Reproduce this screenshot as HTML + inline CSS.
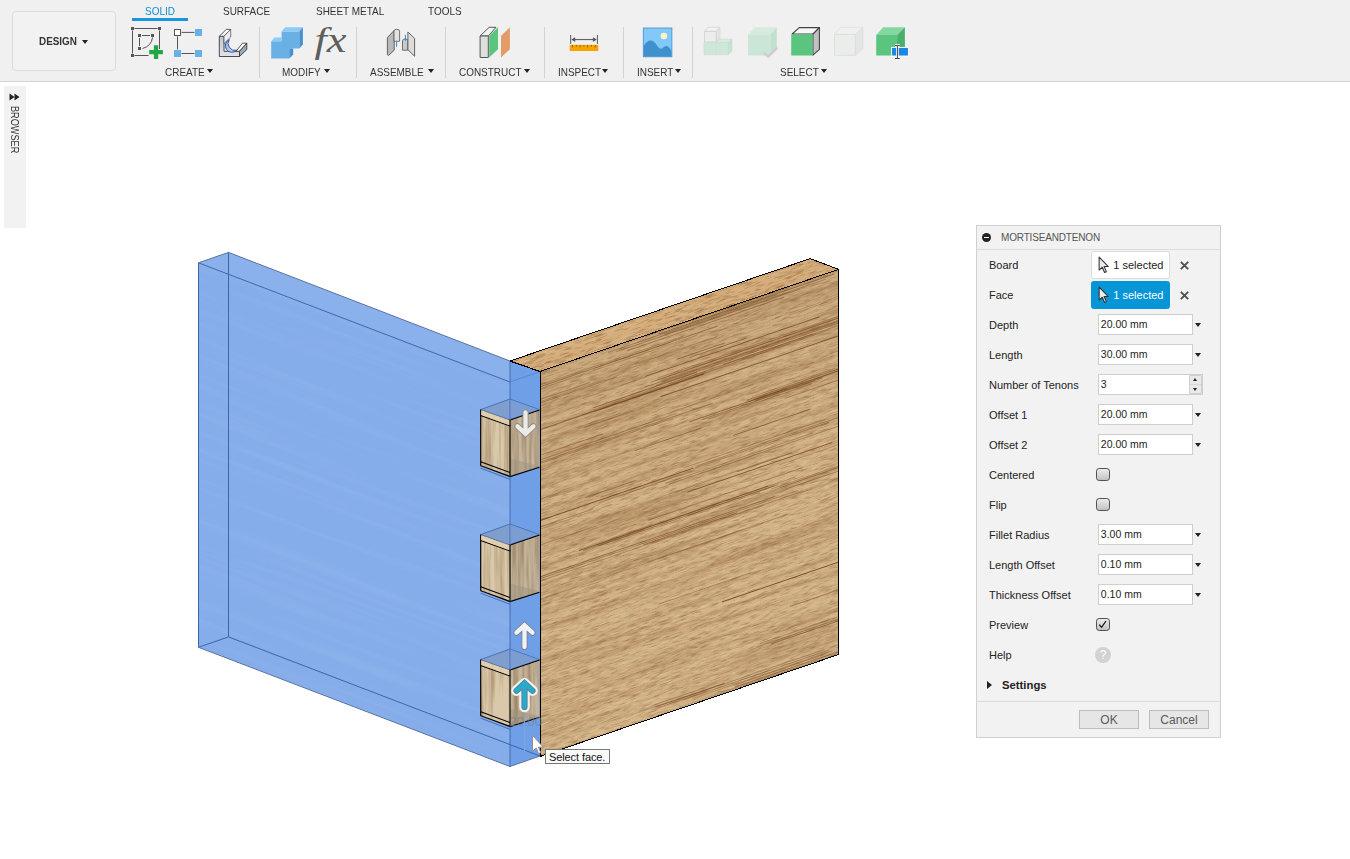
<!DOCTYPE html>
<html><head><meta charset="utf-8"><title>Fusion 360</title>
<style>
*{box-sizing:border-box}
html,body{margin:0;padding:0}
body{width:1350px;height:859px;position:relative;overflow:hidden;background:#fff;font-family:"Liberation Sans",sans-serif;color:#333}
#model{position:absolute;left:0;top:0}
#tb{position:absolute;left:0;top:0;width:1350px;height:82px;background:#f0f0f0;border-bottom:1px solid #d2d2d2}
#design{position:absolute;left:12px;top:11px;width:104px;height:60px;border:1px solid #dcdcdc;border-radius:4px;background:#f2f2f2}
#design span{position:absolute;left:26px;top:23px;font-size:11px;font-weight:bold;color:#333;line-height:13px;transform:scaleX(0.9);transform-origin:0 0}
.dd{position:absolute;width:0;height:0;border-left:3.5px solid transparent;border-right:3.5px solid transparent;border-top:4px solid #222}
.tab{position:absolute;top:5px;font-size:11px;line-height:13px;color:#333;white-space:nowrap;transform:scaleX(0.905);transform-origin:0 0}
.tab.on{color:#0e8fd6}
#tabline{position:absolute;left:132px;top:18px;width:56px;height:3px;background:#1b96dc}
.grp{position:absolute;top:65.5px;font-size:11px;line-height:13px;color:#333;white-space:nowrap;transform:scaleX(0.905);transform-origin:0 0}
.sep{position:absolute;top:26.5px;width:1px;height:51.5px;background:#d3d3d3}
.ico{position:absolute}
#browser{position:absolute;left:4px;top:86px;width:22px;height:142px;background:#f2f2f2}
#browser .t{position:absolute;left:4.5px;top:19.5px;font-size:10px;color:#333;writing-mode:vertical-rl;line-height:11px;transform:scaleY(0.915);transform-origin:0 0}
#dlg{position:absolute;left:976px;top:225px;width:245px;height:513px;background:#f2f2f2;border:1px solid #d0d0d0}
#dlg .hd{position:absolute;left:0;top:0;width:243px;height:23px;border-bottom:1px solid #dcdcdc}
#dlg .hd b{position:absolute;left:5.2px;top:6px;width:9px;height:9px;border-radius:50%;background:#222}
#dlg .hd b:after{content:"";position:absolute;left:2px;top:4px;width:5px;height:1.4px;background:#fff}
#dlg .hd span{position:absolute;left:24px;top:5px;font-size:10px;line-height:12px;color:#555;font-weight:normal;letter-spacing:-0.17px}
.lbl{position:absolute;left:12px;font-size:11px;line-height:13px;color:#222;white-space:nowrap}
.inp{position:absolute;left:121px;width:95px;height:21px;border:1px solid #cfcfcf;background:#fff;font-size:10.5px;line-height:13px;color:#222;padding:3px 0 0 1.8px}
.da{position:absolute;left:217.5px;width:0;height:0;border-left:3px solid transparent;border-right:3px solid transparent;border-top:4px solid #222}
.sel{position:absolute;left:114.3px;width:78.6px;height:28px;border:1.3px solid #dcdcdc;background:#fff;border-radius:2.5px;font-size:11px;line-height:13px;color:#222}
.sel span{position:absolute;left:21px;top:6.4px}
.sel.on{background:#0696d7;border-color:#0696d7;color:#fff}
.sel svg{position:absolute;left:5.6px;top:3.6px}
.xx{position:absolute;left:202.3px;width:11px;height:11px}
.cb{position:absolute;left:119.2px;width:13.6px;height:13.2px;border:1.2px solid #505050;border-radius:3.2px;background:linear-gradient(#ececec,#c2c2c2)}
.btn{position:absolute;top:483px;height:19px;border:1px solid #bdbdbd;background:#e6e6e6;font-size:12px;line-height:15px;color:#5a5a5a;text-align:center;padding-top:1.6px}
#tip{position:absolute;left:545px;top:749px;width:65px;height:15px;border:1px solid #767676;background:#fafafa;font-size:11px;line-height:13px;color:#111;padding:1px 0 0 3px;white-space:nowrap;letter-spacing:-0.1px}
</style></head>
<body>
<svg id="model" width="1350" height="859" viewBox="0 0 1350 859">
<defs>
<filter id="grain" x="0" y="0" width="100%" height="100%" color-interpolation-filters="sRGB">
<feTurbulence type="fractalNoise" baseFrequency="0.006 0.16" numOctaves="4" seed="11" result="n"/>
<feColorMatrix in="n" type="matrix" values="0 0 0 0 0.47  0 0 0 0 0.28  0 0 0 0 0.10  0 0 0 2.6 -1.0"/>
</filter>
<filter id="grainL" x="0" y="0" width="100%" height="100%" color-interpolation-filters="sRGB">
<feTurbulence type="fractalNoise" baseFrequency="0.006 0.2" numOctaves="3" seed="5" result="n"/>
<feColorMatrix in="n" type="matrix" values="0 0 0 0 0.90  0 0 0 0 0.81  0 0 0 0 0.65  0 0 0 2.2 -1.0"/>
</filter>
<filter id="speck" x="0" y="0" width="100%" height="100%" color-interpolation-filters="sRGB">
<feTurbulence type="fractalNoise" baseFrequency="0.1 1.3" numOctaves="2" seed="3" result="n"/>
<feColorMatrix in="n" type="matrix" values="0 0 0 0 0.48  0 0 0 0 0.33  0 0 0 0 0.17  0 0 0 3.2 -1.5"/>
</filter>
<filter id="speckL" x="0" y="0" width="100%" height="100%" color-interpolation-filters="sRGB">
<feTurbulence type="fractalNoise" baseFrequency="0.1 1.3" numOctaves="2" seed="23" result="n"/>
<feColorMatrix in="n" type="matrix" values="0 0 0 0 0.93  0 0 0 0 0.85  0 0 0 0 0.70  0 0 0 3.2 -1.5"/>
</filter>
<filter id="grainW" x="0" y="0" width="100%" height="100%" color-interpolation-filters="sRGB">
<feTurbulence type="fractalNoise" baseFrequency="0.004 0.11" numOctaves="3" seed="17" result="n"/>
<feColorMatrix in="n" type="matrix" values="0 0 0 0 0.82  0 0 0 0 0.90  0 0 0 0 1  0 0 0 2.4 -1.0"/>
</filter>
<filter id="grainV" x="0" y="0" width="100%" height="100%" color-interpolation-filters="sRGB">
<feTurbulence type="fractalNoise" baseFrequency="0.22 0.012" numOctaves="3" seed="8" result="n"/>
<feColorMatrix in="n" type="matrix" values="0 0 0 0 0.45  0 0 0 0 0.30  0 0 0 0 0.15  0 0 0 2.4 -0.95"/>
</filter>
<linearGradient id="gTopDark" x1="0" y1="0" x2="0" y2="1"><stop offset="0" stop-color="#7a4c1c" stop-opacity="0.13"/><stop offset="0.45" stop-color="#7a4c1c" stop-opacity="0.04"/><stop offset="1" stop-color="#7a4c1c" stop-opacity="0"/></linearGradient>
<clipPath id="cFront"><polygon points="540.0,371.5 838.6,269.4 838.6,654.5 540.0,756.5"/></clipPath>
<clipPath id="cTop"><polygon points="510.0,361.0 540.0,371.5 838.6,269.4 810.3,258.6"/></clipPath>
</defs>
<polygon points="510.0,361.0 540.0,371.5 838.6,269.4 810.3,258.6" fill="#d5ad7b"/>
<g clip-path="url(#cTop)">
<g transform="translate(505,330) skewY(-18.88)"><rect x="0" y="0" width="345" height="160" filter="url(#grainL)" opacity="0.35"/><rect x="0" y="0" width="345" height="160" filter="url(#speck)" opacity="0.5"/></g>
</g>
<polygon points="540.0,371.5 838.6,269.4 838.6,654.5 540.0,756.5" fill="#d5b58a"/>
<g clip-path="url(#cFront)">
<g transform="translate(540,371.5) skewY(-18.88)"><rect x="0" y="-10" width="300" height="400" filter="url(#grain)" opacity="0.30"/><rect x="0" y="-10" width="300" height="400" filter="url(#grainL)" opacity="0.28"/><rect x="0" y="-10" width="300" height="400" filter="url(#speck)" opacity="0.42"/><rect x="0" y="-10" width="300" height="400" filter="url(#speckL)" opacity="0.36"/><rect x="0" y="-10" width="300" height="400" fill="url(#gTopDark)"/></g>
<line x1="595.0" y1="367.9" x2="671.0" y2="341.9" stroke="#693a14" stroke-width="0.5" stroke-opacity="0.54" stroke-linecap="round"/>
<line x1="528.1" y1="549.2" x2="595.5" y2="526.2" stroke="#693a14" stroke-width="0.5" stroke-opacity="0.62" stroke-linecap="round"/>
<line x1="509.2" y1="410.0" x2="589.4" y2="382.6" stroke="#693a14" stroke-width="0.9" stroke-opacity="0.40" stroke-linecap="round"/>
<line x1="522.2" y1="407.8" x2="605.2" y2="379.4" stroke="#693a14" stroke-width="0.8" stroke-opacity="0.33" stroke-linecap="round"/>
<line x1="519.8" y1="410.0" x2="616.5" y2="376.9" stroke="#693a14" stroke-width="0.7" stroke-opacity="0.47" stroke-linecap="round"/>
<line x1="669.0" y1="494.2" x2="800.0" y2="449.4" stroke="#693a14" stroke-width="0.6" stroke-opacity="0.55" stroke-linecap="round"/>
<line x1="677.1" y1="359.2" x2="724.4" y2="343.1" stroke="#693a14" stroke-width="0.8" stroke-opacity="0.72" stroke-linecap="round"/>
<line x1="689.9" y1="357.4" x2="745.6" y2="338.3" stroke="#693a14" stroke-width="0.8" stroke-opacity="0.63" stroke-linecap="round"/>
<line x1="677.1" y1="699.9" x2="824.3" y2="649.6" stroke="#693a14" stroke-width="0.6" stroke-opacity="0.62" stroke-linecap="round"/>
<line x1="682.9" y1="700.0" x2="829.1" y2="650.0" stroke="#693a14" stroke-width="0.9" stroke-opacity="0.49" stroke-linecap="round"/>
<line x1="693.0" y1="698.4" x2="832.3" y2="650.8" stroke="#693a14" stroke-width="0.7" stroke-opacity="0.42" stroke-linecap="round"/>
<line x1="579.5" y1="550.5" x2="767.9" y2="486.1" stroke="#693a14" stroke-width="0.9" stroke-opacity="0.75" stroke-linecap="round"/>
<line x1="598.1" y1="546.1" x2="774.1" y2="485.8" stroke="#693a14" stroke-width="0.6" stroke-opacity="0.79" stroke-linecap="round"/>
<line x1="605.6" y1="545.1" x2="759.6" y2="492.4" stroke="#693a14" stroke-width="0.6" stroke-opacity="0.43" stroke-linecap="round"/>
<line x1="646.0" y1="336.1" x2="788.3" y2="287.5" stroke="#693a14" stroke-width="0.5" stroke-opacity="0.77" stroke-linecap="round"/>
<line x1="658.7" y1="334.0" x2="833.8" y2="274.1" stroke="#693a14" stroke-width="0.7" stroke-opacity="0.78" stroke-linecap="round"/>
<line x1="664.7" y1="334.3" x2="825.8" y2="279.2" stroke="#693a14" stroke-width="0.7" stroke-opacity="0.52" stroke-linecap="round"/>
<line x1="639.1" y1="544.4" x2="733.5" y2="512.1" stroke="#693a14" stroke-width="0.5" stroke-opacity="0.38" stroke-linecap="round"/>
<line x1="644.1" y1="544.6" x2="736.9" y2="512.9" stroke="#693a14" stroke-width="0.9" stroke-opacity="0.64" stroke-linecap="round"/>
<line x1="650.8" y1="544.1" x2="763.2" y2="505.6" stroke="#693a14" stroke-width="0.7" stroke-opacity="0.37" stroke-linecap="round"/>
<line x1="749.0" y1="401.6" x2="1007.4" y2="313.2" stroke="#693a14" stroke-width="0.7" stroke-opacity="0.68" stroke-linecap="round"/>
<line x1="659.0" y1="604.1" x2="750.9" y2="572.7" stroke="#693a14" stroke-width="0.5" stroke-opacity="0.76" stroke-linecap="round"/>
<line x1="657.7" y1="378.0" x2="903.8" y2="293.9" stroke="#693a14" stroke-width="0.9" stroke-opacity="0.41" stroke-linecap="round"/>
<line x1="657.3" y1="380.2" x2="905.1" y2="295.4" stroke="#693a14" stroke-width="0.6" stroke-opacity="0.57" stroke-linecap="round"/>
<line x1="722.4" y1="601.8" x2="946.4" y2="525.2" stroke="#693a14" stroke-width="1.0" stroke-opacity="0.84" stroke-linecap="round"/>
<line x1="783.9" y1="335.7" x2="926.9" y2="286.8" stroke="#693a14" stroke-width="0.8" stroke-opacity="0.30" stroke-linecap="round"/>
<line x1="779.3" y1="464.9" x2="904.5" y2="422.1" stroke="#693a14" stroke-width="0.7" stroke-opacity="0.40" stroke-linecap="round"/>
<line x1="736.2" y1="684.5" x2="822.7" y2="654.9" stroke="#693a14" stroke-width="0.5" stroke-opacity="0.85" stroke-linecap="round"/>
<line x1="735.2" y1="687.0" x2="842.5" y2="650.3" stroke="#693a14" stroke-width="0.8" stroke-opacity="0.64" stroke-linecap="round"/>
<line x1="750.3" y1="683.8" x2="883.3" y2="638.3" stroke="#693a14" stroke-width="0.5" stroke-opacity="0.60" stroke-linecap="round"/>
<line x1="505.4" y1="611.3" x2="732.3" y2="533.7" stroke="#693a14" stroke-width="0.6" stroke-opacity="0.44" stroke-linecap="round"/>
<line x1="593.2" y1="407.8" x2="696.6" y2="372.4" stroke="#693a14" stroke-width="0.9" stroke-opacity="0.66" stroke-linecap="round"/>
<line x1="598.9" y1="407.9" x2="706.3" y2="371.2" stroke="#693a14" stroke-width="0.9" stroke-opacity="0.37" stroke-linecap="round"/>
<line x1="594.3" y1="411.6" x2="703.8" y2="374.2" stroke="#693a14" stroke-width="0.9" stroke-opacity="0.63" stroke-linecap="round"/>
<line x1="733.7" y1="435.3" x2="810.0" y2="409.2" stroke="#693a14" stroke-width="0.8" stroke-opacity="0.73" stroke-linecap="round"/>
<line x1="532.0" y1="432.4" x2="702.7" y2="374.0" stroke="#693a14" stroke-width="1.0" stroke-opacity="0.54" stroke-linecap="round"/>
<line x1="683.9" y1="467.8" x2="825.5" y2="419.3" stroke="#693a14" stroke-width="0.6" stroke-opacity="0.59" stroke-linecap="round"/>
<line x1="695.8" y1="466.2" x2="866.6" y2="407.8" stroke="#693a14" stroke-width="0.9" stroke-opacity="0.41" stroke-linecap="round"/>
<line x1="694.9" y1="468.0" x2="828.4" y2="422.4" stroke="#693a14" stroke-width="0.6" stroke-opacity="0.67" stroke-linecap="round"/>
<line x1="635.5" y1="364.5" x2="716.8" y2="336.7" stroke="#693a14" stroke-width="0.6" stroke-opacity="0.38" stroke-linecap="round"/>
<line x1="648.2" y1="520.3" x2="802.2" y2="467.7" stroke="#693a14" stroke-width="0.7" stroke-opacity="0.58" stroke-linecap="round"/>
<line x1="599.1" y1="502.9" x2="691.7" y2="471.3" stroke="#693a14" stroke-width="0.7" stroke-opacity="0.58" stroke-linecap="round"/>
<line x1="596.2" y1="545.2" x2="794.6" y2="477.3" stroke="#693a14" stroke-width="0.5" stroke-opacity="0.73" stroke-linecap="round"/>
<line x1="579.6" y1="549.3" x2="652.0" y2="524.6" stroke="#693a14" stroke-width="0.7" stroke-opacity="0.48" stroke-linecap="round"/>
<line x1="583.6" y1="550.4" x2="644.1" y2="529.7" stroke="#693a14" stroke-width="0.9" stroke-opacity="0.45" stroke-linecap="round"/>
<line x1="498.1" y1="513.5" x2="560.9" y2="492.1" stroke="#693a14" stroke-width="0.6" stroke-opacity="0.60" stroke-linecap="round"/>
<line x1="785.0" y1="398.4" x2="870.7" y2="369.0" stroke="#693a14" stroke-width="0.5" stroke-opacity="0.81" stroke-linecap="round"/>
<line x1="684.9" y1="415.5" x2="866.7" y2="353.4" stroke="#693a14" stroke-width="0.5" stroke-opacity="0.31" stroke-linecap="round"/>
<line x1="645.4" y1="387.0" x2="865.6" y2="311.7" stroke="#693a14" stroke-width="0.7" stroke-opacity="0.76" stroke-linecap="round"/>
<line x1="656.0" y1="385.5" x2="905.3" y2="300.3" stroke="#693a14" stroke-width="1.0" stroke-opacity="0.49" stroke-linecap="round"/>
<line x1="669.0" y1="383.6" x2="912.5" y2="300.3" stroke="#693a14" stroke-width="0.7" stroke-opacity="0.49" stroke-linecap="round"/>
<line x1="515.2" y1="535.6" x2="593.0" y2="508.9" stroke="#693a14" stroke-width="0.7" stroke-opacity="0.58" stroke-linecap="round"/>
<line x1="529.9" y1="532.8" x2="608.7" y2="505.8" stroke="#693a14" stroke-width="0.5" stroke-opacity="0.40" stroke-linecap="round"/>
<line x1="576.6" y1="428.0" x2="620.7" y2="413.0" stroke="#693a14" stroke-width="0.6" stroke-opacity="0.30" stroke-linecap="round"/>
<line x1="584.8" y1="427.3" x2="633.6" y2="410.7" stroke="#693a14" stroke-width="0.6" stroke-opacity="0.58" stroke-linecap="round"/>
<line x1="499.8" y1="469.1" x2="602.7" y2="434.0" stroke="#693a14" stroke-width="0.5" stroke-opacity="0.83" stroke-linecap="round"/>
<line x1="760.2" y1="643.4" x2="836.5" y2="617.3" stroke="#693a14" stroke-width="0.6" stroke-opacity="0.64" stroke-linecap="round"/>
<line x1="756.3" y1="647.2" x2="841.1" y2="618.2" stroke="#693a14" stroke-width="0.7" stroke-opacity="0.54" stroke-linecap="round"/>
<line x1="771.2" y1="643.9" x2="863.4" y2="612.3" stroke="#693a14" stroke-width="0.9" stroke-opacity="0.61" stroke-linecap="round"/>
<line x1="737.2" y1="471.6" x2="791.7" y2="453.0" stroke="#693a14" stroke-width="1.0" stroke-opacity="0.51" stroke-linecap="round"/>
<line x1="635.2" y1="450.5" x2="701.1" y2="428.0" stroke="#693a14" stroke-width="0.9" stroke-opacity="0.58" stroke-linecap="round"/>
<line x1="665.5" y1="483.3" x2="812.4" y2="433.1" stroke="#693a14" stroke-width="0.9" stroke-opacity="0.43" stroke-linecap="round"/>
<line x1="669.0" y1="484.2" x2="867.5" y2="416.3" stroke="#693a14" stroke-width="0.5" stroke-opacity="0.80" stroke-linecap="round"/>
<line x1="583.5" y1="398.3" x2="645.6" y2="377.0" stroke="#693a14" stroke-width="0.8" stroke-opacity="0.37" stroke-linecap="round"/>
<line x1="647.5" y1="562.1" x2="786.1" y2="514.8" stroke="#693a14" stroke-width="0.7" stroke-opacity="0.56" stroke-linecap="round"/>
<line x1="527.8" y1="581.1" x2="774.2" y2="496.8" stroke="#693a14" stroke-width="1.0" stroke-opacity="0.55" stroke-linecap="round"/>
<line x1="537.8" y1="579.5" x2="797.6" y2="490.6" stroke="#693a14" stroke-width="0.6" stroke-opacity="0.62" stroke-linecap="round"/>
<line x1="541.8" y1="580.5" x2="802.3" y2="491.4" stroke="#693a14" stroke-width="0.5" stroke-opacity="0.75" stroke-linecap="round"/>
<line x1="650.9" y1="382.2" x2="909.6" y2="293.7" stroke="#693a14" stroke-width="0.8" stroke-opacity="0.52" stroke-linecap="round"/>
<line x1="662.3" y1="380.3" x2="860.4" y2="312.5" stroke="#693a14" stroke-width="0.5" stroke-opacity="0.48" stroke-linecap="round"/>
<line x1="661.8" y1="382.3" x2="862.3" y2="313.8" stroke="#693a14" stroke-width="1.0" stroke-opacity="0.41" stroke-linecap="round"/>
<line x1="511.5" y1="394.9" x2="682.8" y2="336.3" stroke="#693a14" stroke-width="0.7" stroke-opacity="0.45" stroke-linecap="round"/>
<line x1="502.3" y1="399.7" x2="717.2" y2="326.2" stroke="#693a14" stroke-width="0.6" stroke-opacity="0.81" stroke-linecap="round"/>
<line x1="511.5" y1="398.6" x2="696.7" y2="335.3" stroke="#693a14" stroke-width="0.6" stroke-opacity="0.51" stroke-linecap="round"/>
<line x1="790.4" y1="606.3" x2="1025.5" y2="525.8" stroke="#693a14" stroke-width="0.7" stroke-opacity="0.71" stroke-linecap="round"/>
<line x1="688.1" y1="515.5" x2="777.8" y2="484.8" stroke="#693a14" stroke-width="0.6" stroke-opacity="0.71" stroke-linecap="round"/>
<line x1="689.8" y1="421.7" x2="786.4" y2="388.7" stroke="#693a14" stroke-width="0.7" stroke-opacity="0.75" stroke-linecap="round"/>
<line x1="702.7" y1="419.4" x2="815.1" y2="380.9" stroke="#693a14" stroke-width="0.9" stroke-opacity="0.54" stroke-linecap="round"/>
<line x1="708.6" y1="419.0" x2="811.4" y2="383.8" stroke="#693a14" stroke-width="0.8" stroke-opacity="0.48" stroke-linecap="round"/>
<line x1="608.6" y1="352.3" x2="777.0" y2="294.7" stroke="#693a14" stroke-width="0.6" stroke-opacity="0.71" stroke-linecap="round"/>
<line x1="616.5" y1="351.7" x2="799.6" y2="289.1" stroke="#693a14" stroke-width="0.8" stroke-opacity="0.59" stroke-linecap="round"/>
<line x1="627.1" y1="350.8" x2="783.9" y2="297.2" stroke="#693a14" stroke-width="0.9" stroke-opacity="0.51" stroke-linecap="round"/>
<line x1="687.8" y1="492.0" x2="832.0" y2="442.6" stroke="#693a14" stroke-width="0.9" stroke-opacity="0.83" stroke-linecap="round"/>
<line x1="654.5" y1="704.8" x2="703.9" y2="687.9" stroke="#693a14" stroke-width="0.5" stroke-opacity="0.59" stroke-linecap="round"/>
<line x1="655.9" y1="706.8" x2="724.1" y2="683.5" stroke="#693a14" stroke-width="0.8" stroke-opacity="0.72" stroke-linecap="round"/>
<line x1="658.3" y1="707.8" x2="705.6" y2="691.6" stroke="#693a14" stroke-width="0.9" stroke-opacity="0.43" stroke-linecap="round"/>
<line x1="776.4" y1="317.5" x2="965.2" y2="253.0" stroke="#693a14" stroke-width="0.5" stroke-opacity="0.47" stroke-linecap="round"/>
<line x1="789.1" y1="315.0" x2="935.9" y2="264.8" stroke="#693a14" stroke-width="0.9" stroke-opacity="0.30" stroke-linecap="round"/>
<line x1="660.8" y1="396.6" x2="862.9" y2="327.5" stroke="#693a14" stroke-width="1.0" stroke-opacity="0.69" stroke-linecap="round"/>
<line x1="585.5" y1="497.6" x2="635.6" y2="480.5" stroke="#693a14" stroke-width="0.7" stroke-opacity="0.57" stroke-linecap="round"/>
<line x1="601.4" y1="494.5" x2="649.8" y2="477.9" stroke="#693a14" stroke-width="0.7" stroke-opacity="0.30" stroke-linecap="round"/>
<line x1="600.9" y1="497.2" x2="641.7" y2="483.3" stroke="#693a14" stroke-width="0.7" stroke-opacity="0.41" stroke-linecap="round"/>
<line x1="723.5" y1="364.4" x2="811.8" y2="334.2" stroke="#693a14" stroke-width="0.9" stroke-opacity="0.57" stroke-linecap="round"/>
<line x1="742.3" y1="359.6" x2="830.0" y2="329.6" stroke="#693a14" stroke-width="1.0" stroke-opacity="0.33" stroke-linecap="round"/>
<line x1="505.4" y1="532.4" x2="693.3" y2="468.1" stroke="#693a14" stroke-width="0.9" stroke-opacity="0.85" stroke-linecap="round"/>
<line x1="772.0" y1="488.7" x2="874.0" y2="453.8" stroke="#693a14" stroke-width="0.7" stroke-opacity="0.48" stroke-linecap="round"/>
<line x1="780.2" y1="487.5" x2="876.8" y2="454.4" stroke="#693a14" stroke-width="0.6" stroke-opacity="0.83" stroke-linecap="round"/>
<line x1="785.5" y1="489.2" x2="878.2" y2="457.5" stroke="#693a14" stroke-width="0.6" stroke-opacity="0.75" stroke-linecap="round"/>
<line x1="747.3" y1="400.0" x2="863.6" y2="360.3" stroke="#693a14" stroke-width="0.9" stroke-opacity="0.56" stroke-linecap="round"/>
<line x1="754.7" y1="399.3" x2="890.3" y2="353.0" stroke="#693a14" stroke-width="0.7" stroke-opacity="0.51" stroke-linecap="round"/>
<line x1="645.6" y1="376.3" x2="819.1" y2="317.0" stroke="#693a14" stroke-width="1.0" stroke-opacity="0.64" stroke-linecap="round"/>
<line x1="582.2" y1="415.0" x2="789.5" y2="344.0" stroke="#693a14" stroke-width="1.0" stroke-opacity="0.34" stroke-linecap="round"/>
<line x1="752.4" y1="396.7" x2="830.8" y2="369.8" stroke="#693a14" stroke-width="0.5" stroke-opacity="0.57" stroke-linecap="round"/>
<line x1="745.9" y1="401.4" x2="807.0" y2="380.5" stroke="#693a14" stroke-width="0.8" stroke-opacity="0.38" stroke-linecap="round"/>
<line x1="755.6" y1="400.5" x2="822.0" y2="377.8" stroke="#693a14" stroke-width="0.9" stroke-opacity="0.63" stroke-linecap="round"/>
<line x1="653.3" y1="418.4" x2="753.0" y2="384.3" stroke="#693a14" stroke-width="0.7" stroke-opacity="0.36" stroke-linecap="round"/>
<line x1="516.4" y1="468.0" x2="676.2" y2="413.4" stroke="#693a14" stroke-width="0.9" stroke-opacity="0.43" stroke-linecap="round"/>
<line x1="528.3" y1="466.3" x2="712.3" y2="403.4" stroke="#693a14" stroke-width="0.9" stroke-opacity="0.46" stroke-linecap="round"/>
<line x1="530.1" y1="467.0" x2="673.0" y2="418.2" stroke="#693a14" stroke-width="0.6" stroke-opacity="0.54" stroke-linecap="round"/>
</g>
<polygon points="510.0,361.0 540.0,371.5 838.6,269.4 810.3,258.6" stroke="#000" stroke-width="1" fill="none" stroke-linejoin="round" shape-rendering="crispEdges"/>
<polyline points="838.6,269.4 838.6,654.5 540.0,756.5 540.0,371.5" stroke="#000" stroke-width="1" fill="none" stroke-linejoin="round" shape-rendering="crispEdges"/>
<polygon points="198.5,262.8 510.0,382.0 510.0,766.5 198.5,647.3" fill="#85adea"/>
<clipPath id="cBlue"><polygon points="198.5,262.8 510.0,382.0 510.0,766.5 198.5,647.3"/></clipPath>
<g clip-path="url(#cBlue)"><g transform="translate(198,262.8) skewY(20.9)"><rect x="0" y="-5" width="314" height="395" filter="url(#grainW)" opacity="0.08"/></g></g>
<polygon points="198.5,262.8 228.5,252.4 510.0,361.0 510.0,382.0" fill="#8ab1ec"/>
<polygon points="510.0,361.0 540.0,371.5 540.0,756.0 510.0,766.5" fill="#6f9fe6"/>
<polygon points="480.7,409.6 510.0,399.0 539.5,409.6 510.0,420.0" fill="#7f9dcd"/>
<polygon points="480.7,409.6 510.0,420.0 510.0,476.5 480.7,465.7" fill="#d9c8a9"/>
<polygon points="510.0,420.0 539.5,409.6 539.5,467.3 510.0,476.5" fill="#c4b59c"/>
<clipPath id="cT420"><polygon points="480.7,409.6 510.0,420.0 510.0,476.5 480.7,465.7"/><polygon points="510.0,420.0 539.5,409.6 539.5,467.3 510.0,476.5"/></clipPath>
<g clip-path="url(#cT420)"><rect x="480" y="408" width="60" height="70.5" filter="url(#grainV)" opacity="0.42"/></g>
<polygon points="510.0,458.5 539.5,466.3 539.5,467.3 510.0,476.5" fill="#9b907f" opacity="0.45"/>
<polyline points="510.0,399.0 539.5,409.6 510.0,420.0 480.7,409.6 510.0,399.0" stroke="#3f67ad" stroke-width="1" fill="none" opacity="0.8"/>
<polyline points="480.7,409.6 480.7,465.7 510.0,476.5 539.5,467.3" stroke="#000" stroke-width="1.2" fill="none"/>
<polyline points="480.7,415.6 510.0,426.0 510.0,476.5" stroke="#000" stroke-width="1.1" fill="none"/>
<polygon points="481.2,410.4 509.5,420.6 509.5,425.2 481.2,415.0" fill="#e6d3b0" opacity="0.8"/>
<polyline points="480.7,461.7 510.0,472.5" stroke="#000" stroke-width="1.1" fill="none"/>
<polyline points="510.0,426.0 510.0,420.0 539.5,410.0" stroke="#000" stroke-width="1.1" fill="none"/>
<polyline points="480.7,468.2 510.0,479.3" stroke="#3f67ad" stroke-width="0.9" fill="none"/>
<line x1="510" y1="399" x2="510" y2="420" stroke="#3c65ab" stroke-width="1" opacity="0.8"/>
<polygon points="510.0,399.0 539.5,409.6 510.0,420.0" fill="#6f9fe6" opacity="0.25"/>
<polygon points="480.7,534.6 510.0,524.0 539.5,534.6 510.0,545.0" fill="#7f9dcd"/>
<polygon points="480.7,534.6 510.0,545.0 510.0,601.5 480.7,590.7" fill="#d9c8a9"/>
<polygon points="510.0,545.0 539.5,534.6 539.5,592.3 510.0,601.5" fill="#c4b59c"/>
<clipPath id="cT545"><polygon points="480.7,534.6 510.0,545.0 510.0,601.5 480.7,590.7"/><polygon points="510.0,545.0 539.5,534.6 539.5,592.3 510.0,601.5"/></clipPath>
<g clip-path="url(#cT545)"><rect x="480" y="533" width="60" height="70.5" filter="url(#grainV)" opacity="0.42"/></g>
<polygon points="510.0,583.5 539.5,591.3 539.5,592.3 510.0,601.5" fill="#9b907f" opacity="0.45"/>
<polyline points="510.0,524.0 539.5,534.6 510.0,545.0 480.7,534.6 510.0,524.0" stroke="#3f67ad" stroke-width="1" fill="none" opacity="0.8"/>
<polyline points="480.7,534.6 480.7,590.7 510.0,601.5 539.5,592.3" stroke="#000" stroke-width="1.2" fill="none"/>
<polyline points="480.7,540.6 510.0,551.0 510.0,601.5" stroke="#000" stroke-width="1.1" fill="none"/>
<polygon points="481.2,535.4 509.5,545.6 509.5,550.2 481.2,540.0" fill="#e6d3b0" opacity="0.8"/>
<polyline points="480.7,586.7 510.0,597.5" stroke="#000" stroke-width="1.1" fill="none"/>
<polyline points="510.0,551.0 510.0,545.0 539.5,535.0" stroke="#000" stroke-width="1.1" fill="none"/>
<polyline points="480.7,593.2 510.0,604.3" stroke="#3f67ad" stroke-width="0.9" fill="none"/>
<line x1="510" y1="524" x2="510" y2="545" stroke="#3c65ab" stroke-width="1" opacity="0.8"/>
<polygon points="510.0,524.0 539.5,534.6 510.0,545.0" fill="#6f9fe6" opacity="0.25"/>
<polygon points="480.7,659.6 510.0,649.0 539.5,659.6 510.0,670.0" fill="#7f9dcd"/>
<polygon points="480.7,659.6 510.0,670.0 510.0,726.5 480.7,715.7" fill="#d9c8a9"/>
<polygon points="510.0,670.0 539.5,659.6 539.5,717.3 510.0,726.5" fill="#c4b59c"/>
<clipPath id="cT670"><polygon points="480.7,659.6 510.0,670.0 510.0,726.5 480.7,715.7"/><polygon points="510.0,670.0 539.5,659.6 539.5,717.3 510.0,726.5"/></clipPath>
<g clip-path="url(#cT670)"><rect x="480" y="658" width="60" height="70.5" filter="url(#grainV)" opacity="0.42"/></g>
<polygon points="510.0,708.5 539.5,716.3 539.5,717.3 510.0,726.5" fill="#9b907f" opacity="0.45"/>
<polyline points="510.0,649.0 539.5,659.6 510.0,670.0 480.7,659.6 510.0,649.0" stroke="#3f67ad" stroke-width="1" fill="none" opacity="0.8"/>
<polyline points="480.7,659.6 480.7,715.7 510.0,726.5 539.5,717.3" stroke="#000" stroke-width="1.2" fill="none"/>
<polyline points="480.7,665.6 510.0,676.0 510.0,726.5" stroke="#000" stroke-width="1.1" fill="none"/>
<polygon points="481.2,660.4 509.5,670.6 509.5,675.2 481.2,665.0" fill="#e6d3b0" opacity="0.8"/>
<polyline points="480.7,711.7 510.0,722.5" stroke="#000" stroke-width="1.1" fill="none"/>
<polyline points="510.0,676.0 510.0,670.0 539.5,660.0" stroke="#000" stroke-width="1.1" fill="none"/>
<polyline points="480.7,718.2 510.0,729.3" stroke="#3f67ad" stroke-width="0.9" fill="none"/>
<line x1="510" y1="649" x2="510" y2="670" stroke="#3c65ab" stroke-width="1" opacity="0.8"/>
<polygon points="510.0,649.0 539.5,659.6 510.0,670.0" fill="#6f9fe6" opacity="0.25"/>
<polyline points="198.5,262.8 510.0,382.0" stroke="#3c65ab" stroke-width="1" fill="none"/>
<polyline points="198.5,647.3 510.0,766.5" stroke="#5b72a0" stroke-width="1" fill="none"/>
<polyline points="198.5,262.8 228.5,252.4 510.0,361.0" stroke="#5b72a0" stroke-width="1" fill="none"/>
<polyline points="198.5,262.8 198.5,647.3" stroke="#3c65ab" stroke-width="1" fill="none"/>
<polyline points="228.5,252.4 228.5,636.9" stroke="#3c65ab" stroke-width="1" fill="none"/>
<polyline points="198.5,647.3 228.5,636.9 510.0,744.6 540.0,756.0" stroke="#3c65ab" stroke-width="1" fill="none"/>
<polyline points="510.0,766.5 540.0,756.0" stroke="#5b72a0" stroke-width="1" fill="none"/>
<polyline points="510.0,382.0 540.0,371.5" stroke="#4a78c8" stroke-width="0.8" fill="none" opacity="0.8"/>
<line x1="510" y1="361" x2="510" y2="399" stroke="#3c65ab" stroke-width="1" opacity="0.85"/>
<line x1="510" y1="476.5" x2="510" y2="524" stroke="#3c65ab" stroke-width="1" opacity="0.85"/>
<line x1="510" y1="601.5" x2="510" y2="649" stroke="#3c65ab" stroke-width="1" opacity="0.85"/>
<line x1="510" y1="726.5" x2="510" y2="767" stroke="#3c65ab" stroke-width="1" opacity="0.85"/>
<line x1="540.5" y1="371.5" x2="540.5" y2="756.5" stroke="#000" stroke-width="1.2" shape-rendering="crispEdges"/>
<polyline points="510.0,361.0 540.0,371.5" stroke="#000" stroke-width="1.2" fill="none" shape-rendering="crispEdges"/>
<line x1="524.6" y1="716" x2="524.6" y2="752" stroke="#7fa6e0" stroke-width="1"/>
<text x="509.5" y="725.5" font-family="Liberation Sans, sans-serif" font-size="13" fill="#777b86" fill-opacity="0.65">20.00</text>
<g opacity="0.95" fill="none" stroke-linecap="round" stroke-linejoin="miter"><path d="M525.5,412.5 L525.5,433.0 M517.5,426.3 L525.5,433.7 L533.5,426.3" stroke="#8a8a8a" stroke-width="6.2"/><path d="M525.5,412.5 L525.5,433.0 M517.5,426.3 L525.5,433.7 L533.5,426.3" stroke="#f1efec" stroke-width="4.3"/></g>
<g opacity="0.97" fill="none" stroke-linecap="round" stroke-linejoin="miter"><path d="M524.5,647 L524.5,626.0 M516.5,632.7 L524.5,625.3 L532.5,632.7" stroke="#7d828c" stroke-width="6.2"/><path d="M524.5,647 L524.5,626.0 M516.5,632.7 L524.5,625.3 L532.5,632.7" stroke="#f4f5f8" stroke-width="4.3"/></g>
<g opacity="1" fill="none" stroke-linecap="round" stroke-linejoin="miter"><path d="M524.5,707 L524.5,684.0 M516.5,690.7 L524.5,683.3 L532.5,690.7" stroke="#f4f2ee" stroke-width="10.5" stroke-linejoin="round"/><path d="M524.5,707 L524.5,684.0 M516.5,690.7 L524.5,683.3 L532.5,690.7" stroke="#4f8797" stroke-width="6.2"/><path d="M524.5,707 L524.5,684.0 M516.5,690.7 L524.5,683.3 L532.5,690.7" stroke="#2aa9cb" stroke-width="4.3"/></g>
<path d="M532.5,735.5 L532.5,751.5 L536.2,748 L538.6,753.6 L540.8,752.6 L538.4,747.2 L543.4,747.2 Z" fill="#fff" stroke="#8a8a8a" stroke-width="0.9" stroke-linejoin="round"/>
</svg>
<div id="tb">
<div id="design"><span>DESIGN</span><div class="dd" style="left:68.5px;top:27.5px"></div></div>
<div class="tab on" style="left:145px">SOLID</div>
<div class="tab" style="left:223px">SURFACE</div>
<div class="tab" style="left:316px">SHEET METAL</div>
<div class="tab" style="left:428px">TOOLS</div>
<div id="tabline"></div>
<div class="grp" style="left:165px">CREATE</div><div class="dd" style="left:207.3px;top:69.2px;border-left-width:3.2px;border-right-width:3.2px;border-top-width:4px"></div>
<div class="grp" style="left:282px">MODIFY</div><div class="dd" style="left:324px;top:69.2px;border-left-width:3.2px;border-right-width:3.2px;border-top-width:4px"></div>
<div class="grp" style="left:370px">ASSEMBLE</div><div class="dd" style="left:428.3px;top:69.2px;border-left-width:3.2px;border-right-width:3.2px;border-top-width:4px"></div>
<div class="grp" style="left:458.5px">CONSTRUCT</div><div class="dd" style="left:523.8px;top:69.2px;border-left-width:3.2px;border-right-width:3.2px;border-top-width:4px"></div>
<div class="grp" style="left:558px">INSPECT</div><div class="dd" style="left:602px;top:69.2px;border-left-width:3.2px;border-right-width:3.2px;border-top-width:4px"></div>
<div class="grp" style="left:637px">INSERT</div><div class="dd" style="left:675px;top:69.2px;border-left-width:3.2px;border-right-width:3.2px;border-top-width:4px"></div>
<div class="grp" style="left:780px">SELECT</div><div class="dd" style="left:821px;top:69.2px;border-left-width:3.2px;border-right-width:3.2px;border-top-width:4px"></div>
<div class="sep" style="left:259px"></div>
<div class="sep" style="left:356px"></div>
<div class="sep" style="left:445px"></div>
<div class="sep" style="left:544px"></div>
<div class="sep" style="left:623px"></div>
<div class="sep" style="left:692px"></div>
<svg class="ico" style="left:0;top:0" width="1350" height="82" viewBox="0 0 1350 82">
<path d="M134.5,28.5 H157.5 M159.5,30.5 V49 M132.5,30.5 V53.5 M134.5,55.5 H148.5" stroke="#555" stroke-width="1" fill="none"/>
<rect x="131" y="27" width="3" height="3" fill="#555"/>
<rect x="158" y="27" width="3" height="3" fill="#555"/>
<rect x="131" y="54" width="3" height="3" fill="#555"/>
<rect x="138" y="34" width="3" height="3" fill="#555"/>
<rect x="151" y="34" width="3" height="3" fill="#555"/>
<rect x="138" y="47" width="3" height="3" fill="#555"/>
<path d="M142,35.5 H150 M139.5,38 V46 M152.5,37.5 Q151.5,46 142.5,48.5" stroke="#555" stroke-width="1" fill="none"/>
<path d="M153.9,45.2 H158.2 V49.9 H162.9 V54.2 H158.2 V58.9 H153.9 V54.2 H149.2 V49.9 H153.9 Z" fill="#22a746"/>
<path d="M181.5,32.4 H194.5 M177.5,36.3 V49.5 M181.5,53.5 H194.5" stroke="#555" stroke-width="1" fill="none"/>
<rect x="174.5" y="29.5" width="6" height="6" fill="#fff" stroke="#555" stroke-width="1"/>
<rect x="195" y="29" width="7" height="7" fill="#69b0e5"/>
<rect x="174" y="50" width="7" height="7" fill="#69b0e5"/>
<rect x="195" y="50" width="7" height="7" fill="#69b0e5"/>
<defs><linearGradient id="gcr" x1="0" y1="0" x2="1" y2="1"><stop offset="0" stop-color="#8fb3e3"/><stop offset="1" stop-color="#c3d8f2"/></linearGradient><linearGradient id="gfr" x1="0" y1="0" x2="0" y2="1"><stop offset="0" stop-color="#c3c7d3"/><stop offset="1" stop-color="#dfe2e9"/></linearGradient></defs>
<polygon points="219.3,36.3 224,36.3 224,51.3 239.5,51.3 239.5,56.5 219.3,56.5" fill="url(#gfr)" stroke="#4a4a4a" stroke-width="1" stroke-linejoin="round" />
<polygon points="219.3,36.3 226.3,29.4 230.7,29.4 224,36.3" fill="#fbfbfb" stroke="#4a4a4a" stroke-width="0.9" stroke-linejoin="round" />
<polygon points="224,36.3 230.7,29.4 230.7,37 224,43.5" fill="#eef0f4" stroke="#5a5a5a" stroke-width="0.8" stroke-linejoin="round" />
<polygon points="236,51.3 242.5,43.2 246.8,43.2 239.5,51.3" fill="#fafafa" stroke="#4a4a4a" stroke-width="0.9" stroke-linejoin="round" />
<polygon points="239.5,51.3 246.8,43.2 246.8,49.5 239.5,56.5" fill="#9ea9b7" stroke="#3a3a3a" stroke-width="0.9" stroke-linejoin="round" />
<path d="M229.3,39.6 A6.6,6.6 0 1 0 236.6,50.3 A7,7 0 0 1 229.3,39.6 Z" fill="url(#gcr)" stroke="#2b4a8c" stroke-width="0.9"/>
<polygon points="271.2,41.3 281.6,41.3 281.6,31.6 299.4,31.6 299.4,48.4 289.3,48.4 289.3,58.5 271.2,58.5" fill="#69b0e5" />
<polygon points="281.6,31.6 285.1,27.3 302.9,27.3 299.4,31.6" fill="#8ccaf7" />
<polygon points="271.2,41.3 274.5,37.5 281.6,37.5 281.6,41.3" fill="#8ccaf7" />
<polygon points="299.4,31.6 302.9,27.3 302.9,44.3 299.4,48.4" fill="#4490d0" />
<polygon points="289.3,48.4 293.2,48.4 293.2,54.4 289.3,58.5" fill="#4490d0" />
<text x="314.5" y="52" font-family="Liberation Serif, serif" font-style="italic" font-size="35" fill="#5e5e5e" textLength="32" lengthAdjust="spacingAndGlyphs">fx</text>
<polygon points="387.4,37.5 394.2,30.4 394.2,50.2 388.3,55.6 387.4,54.6" fill="#b9b9b9" stroke="#555" stroke-width="0.9" stroke-linejoin="round" />
<path d="M394,31 Q394,29.3 396.8,29.3 Q399.6,29.3 399.6,31 V41.3 H394 Z" fill="#e2e2e2" stroke="#555" stroke-width="0.8"/>
<line x1="396.6" y1="42" x2="396.6" y2="46.8" stroke="#1a8fe0" stroke-width="1"/>
<path d="M402.5,40.5 Q402.5,39 405.2,39 Q407.9,39 407.9,40.5 V50.2 H402.5 Z" fill="#c9c9c9" stroke="#555" stroke-width="0.8"/>
<line x1="405.4" y1="34.8" x2="405.4" y2="40.8" stroke="#1a8fe0" stroke-width="1"/>
<polygon points="407.9,32 414.6,38.4 414.6,56.2 407.9,49.8" fill="#dcdcdc" stroke="#555" stroke-width="0.9" stroke-linejoin="round" />
<polygon points="480.1,36 489.2,27.3 496,27.3 488.3,36" fill="#f3f3f3" stroke="#555" stroke-width="1" stroke-linejoin="round" />
<polygon points="480.1,36 488.3,36 488.3,57.5 480.1,57.5" fill="#dedede" stroke="#555" stroke-width="1" stroke-linejoin="round" />
<polygon points="489.2,36 498,27.3 498,49.3 489.2,57.5" fill="#5bc47f" />
<polygon points="501,36 509.9,27.3 509.9,49.3 501,57.5" fill="#e39b68" />
<rect x="569.7" y="44.9" width="28.6" height="6.1" fill="#f7a400"/>
<line x1="572.5" y1="44.9" x2="572.5" y2="47.4" stroke="#7a5a10" stroke-width="0.8"/>
<line x1="576.3" y1="44.9" x2="576.3" y2="46.6" stroke="#7a5a10" stroke-width="0.8"/>
<line x1="580.1" y1="44.9" x2="580.1" y2="47.4" stroke="#7a5a10" stroke-width="0.8"/>
<line x1="583.9" y1="44.9" x2="583.9" y2="46.6" stroke="#7a5a10" stroke-width="0.8"/>
<line x1="587.7" y1="44.9" x2="587.7" y2="47.4" stroke="#7a5a10" stroke-width="0.8"/>
<line x1="591.5" y1="44.9" x2="591.5" y2="46.6" stroke="#7a5a10" stroke-width="0.8"/>
<line x1="595.3" y1="44.9" x2="595.3" y2="47.4" stroke="#7a5a10" stroke-width="0.8"/>
<path d="M570.7,35 V44 M597.4,35 V44 M572,39.6 H596" stroke="#555" stroke-width="1" fill="none"/>
<path d="M571.3,39.6 L575.2,37.2 V42 Z M596.8,39.6 L592.9,37.2 V42 Z" fill="#555"/>
<rect x="643.3" y="28" width="28.6" height="28.8" fill="#82c8f8" stroke="#3d8fcf" stroke-width="0.8"/>
<path d="M643.7,46 Q647,40.5 650.5,40.5 Q654,40.5 657,45.5 Q659.5,49.5 662,48.5 Q664,46 666.5,46 Q669.5,46.5 671.5,51.5 V56.4 H643.7 Z" fill="#3e91cc"/>
<circle cx="663.9" cy="36" r="3.3" fill="#fdf7c8"/>
<polygon points="704.5,31.4 708,27.3 719.8,27.3 716.2,31.4" fill="#f2f2f2" stroke="#d6d6d6" stroke-width="0.8" stroke-linejoin="round" />
<polygon points="716.2,31.4 719.8,27.3 719.8,38.7 716.2,42" fill="#e6e6e6" stroke="#d6d6d6" stroke-width="0.8" stroke-linejoin="round" />
<polygon points="704.5,31.4 716.2,31.4 716.2,42 704.5,42" fill="#ededed" stroke="#d0d0d0" stroke-width="0.8" stroke-linejoin="round" />
<polygon points="704,42.3 728.4,42.3 728.4,54.7 704,54.7" fill="#cfe7d8" stroke="#c3e0ce" stroke-width="0.6" stroke-linejoin="round" />
<polygon points="716.2,42.3 719.8,39.2 732,39.2 728.4,42.3" fill="#d9ecdf" stroke="#c3e0ce" stroke-width="0.6" stroke-linejoin="round" />
<polygon points="728.4,42.3 732,39.2 732,51 728.4,54.7" fill="#c6e2d0" stroke="#c3e0ce" stroke-width="0.6" stroke-linejoin="round" />
<line x1="716.2" y1="42.3" x2="716.2" y2="54.7" stroke="#c3e0ce" stroke-width="0.6"/>
<polygon points="748,34.7 755,27.3 776.8,27.3 770.3,34.7" fill="#d6ebde" />
<polygon points="770.3,34.7 776.8,27.3 776.8,48.5 770.3,55.5" fill="#c3dfce" />
<polygon points="748,34.7 770.3,34.7 770.3,55.5 748,55.5" fill="#cbe6d6" />
<path d="M763.6,52.4 L768.3,56.4 L777.2,47.8" stroke="#cfcfcf" stroke-width="2.6" fill="none"/>
<polygon points="792.2,34 799.3,27.6 819.4,27.6 812.9,34" fill="#f6f6f6" stroke="#444" stroke-width="1.1" stroke-linejoin="round" />
<polygon points="812.9,34.3 819.4,27.6 819.4,49.3 812.9,55.2" fill="#c1c1c1" stroke="#444" stroke-width="1.1" stroke-linejoin="round" />
<polygon points="791.2,34.3 812.7,34.3 812.7,55.5 791.2,55.5" fill="#5bc47f" />
<polygon points="834.3,34.3 840.9,27.3 862.9,27.3 855.5,34.3" fill="#f0f0f0" stroke="#dcdcdc" stroke-width="0.7" stroke-linejoin="round" />
<polygon points="855.5,34.3 862.9,27.3 862.9,48.5 855.5,55.5" fill="#e5e5e5" stroke="#dcdcdc" stroke-width="0.7" stroke-linejoin="round" />
<polygon points="834.5,34.5 855.3,34.5 855.3,55.3 834.5,55.3" fill="#ececec" stroke="#cde4d5" stroke-width="0.8" stroke-linejoin="round" />
<polygon points="876.2,35 883.2,27.3 904.9,27.3 897.1,35" fill="#86d6a1" />
<polygon points="897.1,35 904.9,27.3 904.9,48.5 897.1,55.5" fill="#48b06c" />
<polygon points="876.2,35 897.1,35 897.1,55.5 876.2,55.5" fill="#5bc47f" />
<rect x="891.6" y="47.4" width="16.8" height="8.6" fill="#1b86e3" stroke="#fff" stroke-width="0.9"/>
<path d="M895,45.4 H899.8 M895,58.5 H899.8 M897.4,45.4 V58.5" stroke="#fff" stroke-width="2.6" fill="none"/>
<path d="M895,45.4 H899.8 M895,58.5 H899.8 M897.4,45.4 V58.5" stroke="#444" stroke-width="1" fill="none"/>
</svg>
</div>
<div id="browser"><svg width="12" height="8" style="position:absolute;left:5px;top:7px" viewBox="0 0 12 8"><path d="M0.5,0.5 L5.5,4 L0.5,7.5Z M5.5,0.5 L10.5,4 L5.5,7.5Z" fill="#222"/></svg><div class="t">BROWSER</div></div>
<div id="dlg"><div style="position:absolute;left:0;top:1px;width:243px;height:510px">
<div class="hd"><b></b><span>MORTISEANDTENON</span></div>
<div class="lbl" style="top:32px">Board</div>
<div class="sel" style="top:24.4px"><svg width="12.4" height="18" viewBox="0 0 11 16"><path d="M1,1 L1,12.5 L3.8,10 L5.8,14.6 L7.4,13.9 L5.4,9.4 L9.2,9.4 Z" fill="#ececec" stroke="#333" stroke-width="0.95" stroke-linejoin="round"/></svg><span>1 selected</span></div><svg class="xx" style="top:32.5px" viewBox="0 0 11 11"><path d="M1.8,1.8 L9.2,9.2 M9.2,1.8 L1.8,9.2" stroke="#505050" stroke-width="1.9" fill="none"/></svg>
<div class="lbl" style="top:62px">Face</div>
<div class="sel on" style="top:54.4px"><svg width="12.4" height="18" viewBox="0 0 11 16"><path d="M1,1 L1,12.5 L3.8,10 L5.8,14.6 L7.4,13.9 L5.4,9.4 L9.2,9.4 Z" fill="#ececec" stroke="#333" stroke-width="0.95" stroke-linejoin="round"/></svg><span>1 selected</span></div><svg class="xx" style="top:62.5px" viewBox="0 0 11 11"><path d="M1.8,1.8 L9.2,9.2 M9.2,1.8 L1.8,9.2" stroke="#505050" stroke-width="1.9" fill="none"/></svg>
<div class="lbl" style="top:92px">Depth</div>
<div class="inp" style="top:87px">20.00 mm</div><div class="da" style="top:95.7px"></div>
<div class="lbl" style="top:122px">Length</div>
<div class="inp" style="top:117px">30.00 mm</div><div class="da" style="top:125.7px"></div>
<div class="lbl" style="top:152px">Number of Tenons</div>
<div class="inp" style="top:147px;width:105px">3</div>
<div style="position:absolute;left:212px;top:148px;width:13px;height:19px;background:#e9e9e9;border:1px solid #cfcfcf;border-radius:1px"></div>
<div style="position:absolute;left:213px;top:157px;width:11px;height:1px;background:#d8d8d8"></div>
<div style="position:absolute;left:215.6px;top:151.4px;width:0;height:0;border-left:2.9px solid transparent;border-right:2.9px solid transparent;border-bottom:3.4px solid #222"></div>
<div style="position:absolute;left:215.6px;top:161.4px;width:0;height:0;border-left:2.9px solid transparent;border-right:2.9px solid transparent;border-top:3.4px solid #222"></div>
<div class="lbl" style="top:182px">Offset 1</div>
<div class="inp" style="top:177px">20.00 mm</div><div class="da" style="top:185.7px"></div>
<div class="lbl" style="top:212px">Offset 2</div>
<div class="inp" style="top:207px">20.00 mm</div><div class="da" style="top:215.7px"></div>
<div class="lbl" style="top:242px">Centered</div>
<div class="cb" style="top:240.8px"></div>
<div class="lbl" style="top:272px">Flip</div>
<div class="cb" style="top:270.8px"></div>
<div class="lbl" style="top:302px">Fillet Radius</div>
<div class="inp" style="top:297px">3.00 mm</div><div class="da" style="top:305.7px"></div>
<div class="lbl" style="top:332px">Length Offset</div>
<div class="inp" style="top:327px">0.10 mm</div><div class="da" style="top:335.7px"></div>
<div class="lbl" style="top:362px">Thickness Offset</div>
<div class="inp" style="top:357px">0.10 mm</div><div class="da" style="top:365.7px"></div>
<div class="lbl" style="top:392px">Preview</div>
<div class="cb" style="top:390.8px"><svg width="11" height="11" viewBox="0 0 11 11" style="position:absolute;left:0;top:0"><path d="M2.2,5.6 L4.6,8.3 L9,2" stroke="#111" stroke-width="1.25" fill="none"/></svg></div>
<div class="lbl" style="top:422px">Help</div>
<div style="position:absolute;left:118px;top:420.4px;width:16px;height:16px;border-radius:50%;background:#d2d2d2;color:#fff;font-size:12px;line-height:16px;text-align:center">?</div>
<div style="position:absolute;left:9px;left:10px;top:454px;width:0;height:0;border-top:4px solid transparent;border-bottom:4px solid transparent;border-left:5.5px solid #222"></div>
<div class="lbl" style="left:25px;top:452px;font-weight:bold;font-size:11.3px">Settings</div>
<div style="position:absolute;left:0;top:474px;width:243px;height:1px;background:#dcdcdc"></div>
<div class="btn" style="left:102px;width:60px">OK</div><div class="btn" style="left:172px;width:60px">Cancel</div>
</div></div>
<div id="tip">Select face.</div>
</body></html>
